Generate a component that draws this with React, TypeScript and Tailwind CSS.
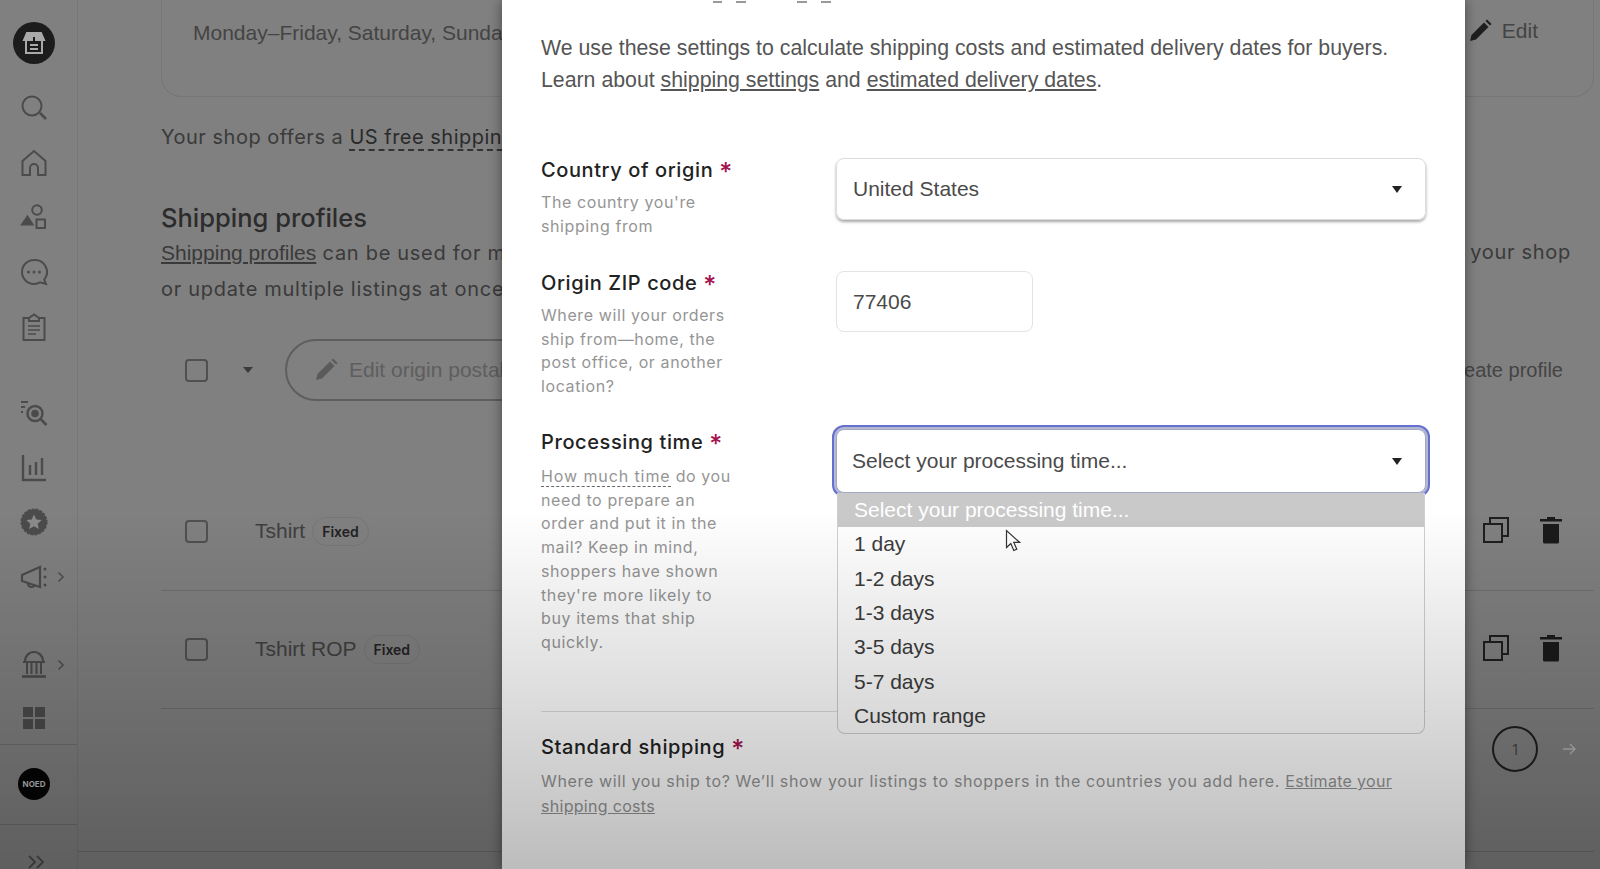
const ui = { fontFamily: 'Inter, "Noto Sans", sans-serif' };

type IconProps = { className?: string };

const LogoIcon = () => (
  <div className="flex h-[42px] w-[42px] items-center justify-center rounded-full bg-[#1c1c1c]">
    <svg width="26" height="26" viewBox="0 0 26 26" fill="none" stroke="#a9a9a9" strokeWidth="2">
      <path d="M6 3h14l3 7H3z" fill="#a9a9a9" />
      <path d="M5 11v12h16V11" />
      <path d="M9 15h8M9 19h8" />
      <path d="M13 7v4" stroke="#1c1c1c" />
    </svg>
  </div>
);

const navIcons: Record<string, React.ReactNode> = {
  search: (
    <>
      <circle cx="12" cy="12" r="9.5" />
      <path d="M20 19l6 6" strokeWidth="2.6" />
    </>
  ),
  home: <path d="M2.5 26V12L14 2l11.5 10v14H18v-7a4 4 0 0 0-8 0v7z" />,
  shapes: (
    <>
      <circle cx="17" cy="7" r="4.8" />
      <path d="M2 21.5l5.5-8 5 8z" fill="#4b4b4b" />
      <rect x="16.5" y="16.5" width="8.5" height="8.5" />
    </>
  ),
  chat: (
    <>
      <path d="M14 2a12 12 0 1 0 0 24c2.6 0 4.5-.6 6-1.6l6 1.6-1.8-4.4A12 12 0 0 0 14 2z" />
      <circle cx="8.5" cy="14" r="1.5" fill="#4b4b4b" stroke="none" />
      <circle cx="14" cy="14" r="1.5" fill="#4b4b4b" stroke="none" />
      <circle cx="19.5" cy="14" r="1.5" fill="#4b4b4b" stroke="none" />
    </>
  ),
  clipboard: (
    <>
      <path d="M9 5H3.5v22h21V5H19" />
      <path d="M9 8V5l5-3.5L19 5v3z" />
      <path d="M8 13h12M8 17h12M8 21h8" strokeWidth="1.6" />
    </>
  ),
  inspect: (
    <>
      <circle cx="15" cy="14.5" r="7.5" strokeWidth="2.4" />
      <circle cx="15" cy="14.5" r="3.8" fill="#4b4b4b" stroke="none" />
      <path d="M21 20.5l5.5 5.5" strokeWidth="2.6" />
      <path d="M1 3h7M1 8h4M1 13h2" strokeWidth="1.8" />
    </>
  ),
  chart: <path d="M3 1v25h23M10 11v10M16 8v13M22 4v17" strokeWidth="2.4" />,
  star: (
    <>
      <circle cx="14" cy="14" r="12.5" fill="#4b4b4b" stroke="#4b4b4b" strokeDasharray="3 1" />
      <path
        d="M14 6.5l2.3 5 5.4.6-4 3.6 1.1 5.3-4.8-2.7-4.8 2.7 1.1-5.3-4-3.6 5.4-.6z"
        fill="#8a8a8a"
        stroke="none"
      />
    </>
  ),
  megaphone: (
    <>
      <path d="M2 12v6l18 6V4L2 12z" strokeWidth="2.2" />
      <path d="M8 20c0 3 1.500 4 3.500 4s3-1 3.500-2" strokeWidth="2.2" />
      <circle cx="25" cy="6" r="1.500" fill="#4b4b4b" stroke="none" />
      <circle cx="25" cy="14" r="1.500" fill="#4b4b4b" stroke="none" />
      <circle cx="25" cy="22" r="1.500" fill="#4b4b4b" stroke="none" />
    </>
  ),
  bank: (
    <>
      <path d="M5 10a9 9 0 0 1 18 0" strokeWidth="2.2" />
      <path d="M3 11h22M7 12v11M11.500 12v11M16.500 12v11M21 12v11" strokeWidth="2" />
      <path d="M2 25.500h24" strokeWidth="2.600" />
    </>
  ),
  grid: (
    <>
      <rect x="3" y="3" width="10" height="10" fill="#4b4b4b" stroke="none" />
      <rect x="15" y="3" width="10" height="10" fill="#4b4b4b" stroke="none" />
      <rect x="3" y="15" width="10" height="10" fill="#4b4b4b" stroke="none" />
      <rect x="15" y="15" width="10" height="10" fill="#4b4b4b" stroke="none" />
    </>
  ),
};

const NavIcon = ({ name }: { name: string }) => (
  <svg width="28" height="28" viewBox="0 0 28 28" fill="none" stroke="#4b4b4b" strokeWidth="2">
    {navIcons[name]}
  </svg>
);

const NavSlot = ({ name, more, className = 'h-[54.6px]' }: { name: string; more?: boolean; className?: string }) => (
  <div className={`relative flex w-full items-center justify-center ${className}`}>
    <NavIcon name={name} />
    {more && (
      <svg className="absolute left-[57px]" width="8" height="12" viewBox="0 0 8 12" fill="none" stroke="#4f4f4f" strokeWidth="1.6">
        <path d="M1.500 1.500L6 6l-4.500 4.500" />
      </svg>
    )}
  </div>
);

const Sidebar = () => (
  <aside className="flex h-full w-[78px] shrink-0 flex-col items-center border-r border-[#777] pt-[22px]">
    <div className="flex w-full flex-col items-center pr-[9px]">
      <LogoIcon />
      <div className="mt-[17px] w-full">
        <NavSlot name="search" />
        <NavSlot name="home" />
        <NavSlot name="shapes" />
        <NavSlot name="chat" />
        <NavSlot name="clipboard" />
      </div>
      <div className="mt-[32px] w-full">
        <NavSlot name="inspect" />
        <NavSlot name="chart" />
        <NavSlot name="star" />
        <NavSlot name="megaphone" more />
      </div>
      <div className="mt-[33px] w-full">
        <NavSlot name="bank" more />
        <NavSlot name="grid" className="h-[52px]" />
      </div>
    </div>
    <div className="flex h-[81px] w-full items-center justify-center border-y border-[#6e6e6e] pr-[9px]">
      <div className="flex h-[32px] w-[32px] items-center justify-center rounded-full bg-[#050505] text-[8px] font-bold text-[#bbb]">
        NOED
      </div>
    </div>
    <svg className="mr-[5px] mt-[30px]" width="18" height="14" viewBox="0 0 18 14" fill="none" stroke="#4b4b4b" strokeWidth="1.800">
      <path d="M2 1l6 6-6 6M10 1l6 6-6 6" />
    </svg>
  </aside>
);

const Checkbox = () => <div className="h-[23px] w-[23px] rounded-[4px] border-2 border-[#505050]" />;

const Pencil = ({ className, fill }: IconProps & { fill: string }) => (
  <svg className={className} width="24" height="24" viewBox="0 0 24 24" fill={fill}>
    <path d="M2 22l1.500-6L16 3.500l4.500 4.500L8 20.500z" />
    <path d="M17.500 2l1.500-1.500 4.500 4.500L22 6.500z" />
  </svg>
);

const CopyIcon = () => (
  <svg width="28" height="28" viewBox="0 0 28 28" fill="none" stroke="#1e1e1e" strokeWidth="2">
    <rect x="2" y="8" width="18" height="18" />
    <path d="M8 8V2h18v18h-6" />
  </svg>
);

const TrashIcon = () => (
  <svg width="24" height="28" viewBox="0 0 24 28" fill="#1a1a1a">
    <path d="M8 1h8v2h7v2.500H1V3h7z" />
    <path d="M4 8h16v18a1.500 1.500 0 0 1-1.500 1.500h-13A1.500 1.500 0 0 1 4 26z" />
  </svg>
);

const ProfileRow = ({ name }: { name: string }) => (
  <div className="flex h-[118px] items-center border-b border-[#6f6f6f] pl-[24px] pr-[31px]">
    <Checkbox />
    <span className="ml-[47px] mt-[-2px] font-['Liberation_Sans'] text-[21px] text-[#3f3f3f]">{name}</span>
    <span className="ml-[7px] mt-[-1px] rounded-full border border-[#777] px-[9px] py-[3px] text-[14px] font-semibold text-[#222]">
      Fixed
    </span>
    <div className="ml-auto mt-[-4px] flex items-center gap-[29px]">
      <CopyIcon />
      <TrashIcon />
    </div>
  </div>
);

const Background = () => (
  <div className="flex h-full bg-[#808080]" style={ui}>
    <Sidebar />
    <main className="min-w-0 flex-1 pl-[83px] pr-[6px]">
      <div className="flex h-[97px] justify-between rounded-b-[20px] border border-t-0 border-[#767676] pl-[31px] pr-[55px] pt-[17px] font-['Liberation_Sans'] text-[21px] leading-[32px] text-[#444]">
        <span className="whitespace-nowrap">Monday–Friday, Saturday, Sunday</span>
        <span className="mt-[-2px] flex items-center gap-[10px] self-start">
          <Pencil fill="#1e1e1e" />
          Edit
        </span>
      </div>
      <p className="mt-[24px] whitespace-nowrap text-[20px] leading-[32px] tracking-[0.5px] text-[#3a3a3a]">
        Your shop offers a <span className="border-b-2 border-dashed border-[#333] text-[#2a2a2a]">US free shipping guarantee</span>
      </p>
      <h2 className="mt-[49px] text-[25.5px] font-medium leading-[32px] text-[#2c2c2c]">Shipping profiles</h2>
      <div className="mt-[1px] flex justify-between whitespace-nowrap pr-[23px] text-[20px] leading-[35.5px] tracking-[0.7px] text-[#3a3a3a]">
        <span>
          <span className="font-['Liberation_Sans'] text-[21px] tracking-normal underline">Shipping profiles</span> can be used for multiple listings
        </span>
        <span>your shop</span>
      </div>
      <p className="whitespace-nowrap text-[20px] leading-[35.5px] tracking-[0.7px] text-[#3a3a3a]">
        or update multiple listings at once
      </p>
      <div className="mt-[32px] flex h-[62px] items-center pl-[24px] pr-[31px]">
        <Checkbox />
        <div className="ml-[35px] h-0 w-0 border-x-[5px] border-t-[6px] border-x-transparent border-t-[#3a3a3a]" />
        <div className="ml-[32px] flex h-[62px] w-[400px] items-center gap-[11px] rounded-full border-2 border-[#5e5e5e] pl-[27px]">
          <Pencil fill="#5a5a5a" />
          <span className="whitespace-nowrap font-['Liberation_Sans'] text-[21px] text-[#5e5e5e]">Edit origin postal code</span>
        </div>
        <span className="ml-auto font-['Liberation_Sans'] text-[20px] text-[#444]">Create profile</span>
      </div>
      <div className="mt-[72px]">
        <ProfileRow name="Tshirt" />
        <ProfileRow name="Tshirt ROP" />
      </div>
      <div className="mt-[17px] flex h-[46px] items-center justify-end pr-[18px]">
        <div className="flex h-[46px] w-[46px] items-center justify-center rounded-full border-2 border-[#1e1e1e] text-[14px] text-[#444]">1</div>
        <svg className="ml-[24px]" width="14" height="14" viewBox="0 0 14 14" fill="none" stroke="#b4b4b4" strokeWidth="1.300">
          <path d="M1 7h12M8 2l5 5-5 5" />
        </svg>
      </div>
      <div className="ml-[-83px] mt-[79px] border-t border-[#6d6d6d]" />
    </main>
  </div>
);

const Star = () => <span className="ml-[6px] align-[-4px] text-[25px] leading-[0] text-[#a3134f]">*</span>;

const Caret = () => <div className="h-0 w-0 border-x-[5.500px] border-t-[7px] border-x-transparent border-t-[#222]" />;

const Label = ({ text }: { text: string }) => (
  <div className="text-[20px] font-medium leading-[24px] tracking-[0.6px] text-[#222]">
    {text}
    <Star />
  </div>
);

const options = ['1 day', '1-2 days', '1-3 days', '3-5 days', '5-7 days', 'Custom range'];

const Dropdown = () => (
  <div className="absolute left-[1px] right-[1px] top-[64px] z-10 h-[241px] overflow-hidden rounded-b-lg border border-t-0 border-[#cfcfcf] bg-white font-['Liberation_Sans'] text-[21px] text-[#3c3c3c]">
    <div className="flex h-[34px] items-center bg-[#c9c9c9] pl-[16px] text-white">Select your processing time...</div>
    {options.map((option) => (
      <div key={option} className="flex h-[34.300px] items-center pl-[16px]">
        {option}
      </div>
    ))}
  </div>
);

const Modal = () => (
  <div className="absolute left-[502px] top-0 h-[869px] w-[963px] overflow-hidden bg-white px-[39px] shadow-[0_0_12px_rgba(0,0,0,0.45)]" style={ui}>
    <div className="relative h-[3px]">
      <div className="absolute left-[172px] top-[1px] h-[2px] w-[9px] bg-[#999]" />
      <div className="absolute left-[195px] top-[1px] h-[2px] w-[10px] bg-[#999]" />
      <div className="absolute left-[256px] top-[1px] h-[2px] w-[10px] bg-[#999]" />
      <div className="absolute left-[280px] top-[1px] h-[2px] w-[10px] bg-[#999]" />
    </div>
    <p className="mt-[30px] font-['Liberation_Sans'] text-[21.3px] leading-[31.500px] text-[#555]">
      We use these settings to calculate shipping costs and estimated delivery dates for buyers.
      <br />
      Learn about <span className="underline">shipping settings</span> and <span className="underline">estimated delivery dates</span>.
    </p>

    <div className="mt-[62px] grid h-[80px] grid-cols-[295px_590px]">
      <div>
        <Label text="Country of origin" />
        <p className="mt-[9px] w-[220px] text-[16px] leading-[23.500px] tracking-[0.6px] text-[#959595]">
          The country you're shipping from
        </p>
      </div>
      <div className="flex h-[62px] items-center justify-between rounded-lg border border-[#ddd] pl-[16px] pr-[23px] font-['Liberation_Sans'] text-[21px] text-[#4a4a4a] shadow-[0_2px_3px_rgba(0,0,0,0.35)]">
        United States
        <Caret />
      </div>
    </div>

    <div className="mt-[33px] grid h-[127px] grid-cols-[295px_590px]">
      <div>
        <Label text="Origin ZIP code" />
        <p className="mt-[9px] w-[200px] text-[16px] leading-[23.500px] tracking-[0.6px] text-[#959595]">
          Where will your orders ship from—home, the post office, or another location?
        </p>
      </div>
      <div className="flex h-[61px] w-[197px] items-center rounded-lg border border-[#e4e4e4] pl-[16px] font-['Liberation_Sans'] text-[21px] text-[#4a4a4a]">
        77406
      </div>
    </div>

    <div className="mt-[32px] grid h-[224px] grid-cols-[295px_590px]">
      <div>
        <Label text="Processing time" />
        <p className="mt-[11px] w-[192px] text-[16px] leading-[23.700px] tracking-[0.6px] text-[#959595]">
          <span className="border-b border-dashed border-[#666] tracking-[0.9px]">How much time</span> do you need to prepare an order and put it in the mail? Keep in mind, shoppers have shown they're more likely to buy items that ship quickly.
        </p>
      </div>
      <div className="relative mt-[-1px] h-[64px]">
        <div className="flex h-[64px] items-center justify-between rounded-lg border border-[#a3a8c4] pl-[15px] pr-[23px] font-['Liberation_Sans'] text-[21px] text-[#4a4a4a] shadow-[0_0_0_2px_#b4b8d2,0_0_0_4px_#6470cf]">
          Select your processing time...
          <Caret />
        </div>
        <Dropdown />
      </div>
    </div>

    <div className="mt-[57px] border-t border-[#ddd]" />
    <div className="mt-[23px]">
      <Label text="Standard shipping" />
      <p className="mt-[10px] w-[860px] text-[16px] leading-[24.500px] tracking-[0.65px] text-[#959595]">
        Where will you ship to? We’ll show your listings to shoppers in the countries you add here. <span className="tracking-[0.3px] underline">Estimate your shipping costs</span>
      </p>
    </div>
  </div>
);

export default function App() {
  return (
    <div className="relative h-[869px] w-[1600px] overflow-hidden">
      <Background />
      <Modal />
      <svg className="absolute left-[1005px] top-[529px] z-20" width="16" height="24" viewBox="0 0 16 24" fill="#fff" stroke="#333" strokeWidth="1.200">
        <path d="M1.500 1.500v17l4.300-4 3 7 3-1.300-3-6.800h5.800z" />
      </svg>
      {/* the video fades to dark towards the bottom */}
      <div className="pointer-events-none absolute inset-x-0 bottom-0 top-[510px] z-30 bg-gradient-to-b from-transparent to-black/26" />
    </div>
  );
}
